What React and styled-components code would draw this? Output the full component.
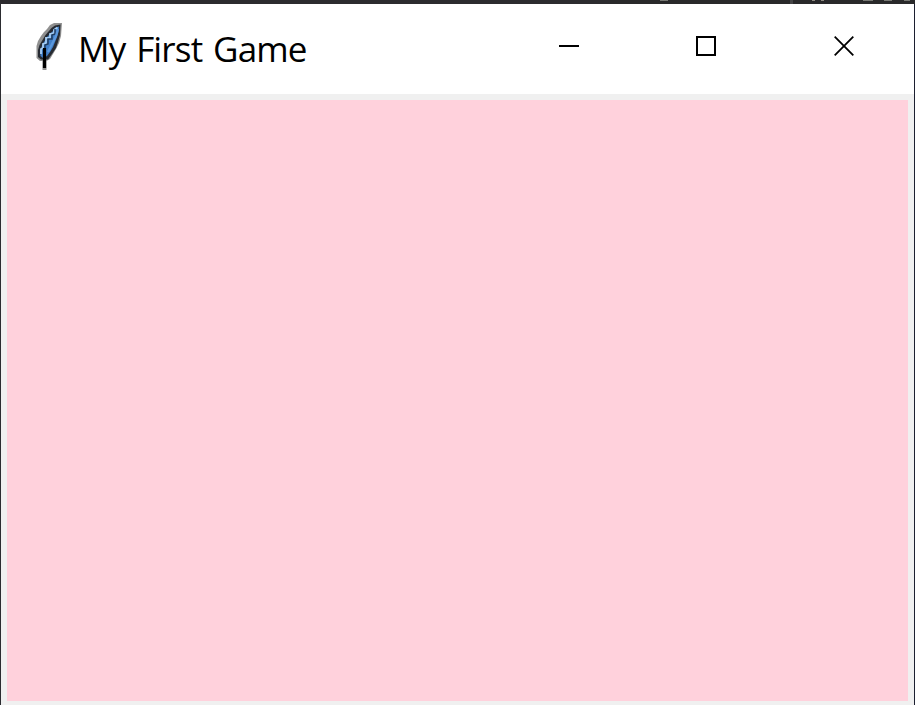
import React from "react";
import styled, { createGlobalStyle } from "styled-components";

const GlobalStyle = createGlobalStyle`
  * { box-sizing: border-box; }
  body { margin: 0; overflow: hidden; background: #28282b; }
`;

const Desktop = styled.div`
  width: 915px;
  height: 705px;
  display: grid;
  grid-template-rows: 4px 1fr;
  background: linear-gradient(90deg, #2b2c30 0 50%, #1c1f30 50%);
`;

const Backdrop = styled.div`
  background: #29292a;
  svg { display: block; }
`;

const Window = styled.main`
  margin: 0 1px;
  display: flex;
  flex-direction: column;
  background: #f0f0f0;
`;

const TitleBar = styled.header`
  height: 90px;
  display: flex;
  align-items: flex-start;
  padding-left: 33px;
  background: #fff;
`;

const AppIcon = styled.svg`
  width: 32px;
  height: 54px;
  margin-top: 16px;
  flex: none;
`;

const Title = styled.h1`
  margin: 20px 0 0 12px;
  color: #000;
  font: 380 35px/50px "Open Sans", "Noto Sans", sans-serif;
  letter-spacing: -0.85px;
  word-spacing: 2.6px;
  white-space: nowrap;
`;

const Controls = styled.div`
  display: flex;
  margin-left: auto;
`;

const ControlButton = styled.button`
  width: ${({ $width }) => $width || 138}px;
  height: 84px;
  padding: 0;
  border: 0;
  display: flex;
  align-items: center;
  justify-content: center;
  background: transparent;
  svg { display: block; }
`;

const Canvas = styled.section`
  flex: 1;
  margin: 6px 6px 4px;
  background: #ffd1dc;
`;

const Feather = () => (
  <AppIcon viewBox="34 20 32 54" aria-hidden="true">
    <defs>
      <filter id="soft" x="-20%" y="-20%" width="140%" height="140%">
        <feGaussianBlur stdDeviation="0.75" />
      </filter>
    </defs>
    <g filter="url(#soft)">
      <path d="M62 23H54L50 25L47 29L44 32L41 36L38 41L36.500 46V58L40 61H42.500V70H46.500V61L50 59L53 54L56 49L59 43L61 36Z" fill="#909090" />
      <path d="M60.500 24.500L55 25.500L51.500 28L48.500 31.500L45.500 35L42.500 40L39.500 45L38 50V57L41 59.500H48L52 54L56 48L58 42L60 35Z" fill="#282c32" />
      <path d="M59 26.500L55 28L53 31L50 34L47 37L44 42L42 46L40.500 50V56L43 58L47 56L50 52L53 47L55 42L57 37L58.500 32Z" fill="#417fc9" />
      <path d="M57.500 27.500L54 30V33L50 34V38L46 38V43L43 44V48L41 49V54" fill="none" stroke="#a5ccf2" strokeWidth="1.8" />
      <path d="M55 29V34L52 35V39L48 39V44L45 45V49" fill="none" stroke="#203b5d" strokeWidth="1.5" />
      <path d="M58 29L56 36L53 42L50 48L48 52" fill="none" stroke="#5c98dc" strokeWidth="2.2" />
      <path d="M44.500 48V68" stroke="#000" strokeWidth="3.2" />
    </g>
  </AppIcon>
);

const BackdropDetails = () => (
  <svg width="915" height="4" aria-hidden="true">
    <path d="M0 0H610V4H0Z" fill="#2c2b2e" />
    <path d="M790 0H793V4H790Z" fill="#444445" />
    <path d="M660 0H668M863 0H873M884 0H892M904 0H910" stroke="#777873" strokeWidth="2" />
    <path d="M812 0H815M821 0H824" stroke="#8c8880" strokeWidth="2" />
  </svg>
);

export default function App() {
  return (
    <>
      <GlobalStyle />
      <Desktop>
        <Backdrop><BackdropDetails /></Backdrop>
        <Window>
          <TitleBar>
            <Feather />
            <Title>My First Game</Title>
            <Controls>
              <ControlButton aria-label="Minimize"><svg width="20" height="20"><path d="M0 10H20" stroke="#000" strokeWidth="2" /></svg></ControlButton>
              <ControlButton $width={136} aria-label="Maximize"><svg width="20" height="20"><rect x="1" y="1" width="18" height="18" fill="none" stroke="#000" strokeWidth="2" /></svg></ControlButton>
              <ControlButton $width={140} aria-label="Close"><svg width="20" height="20"><path d="M.7 .7L19.3 19.3M19.3 .7L.7 19.3" stroke="#000" strokeWidth="1.8" /></svg></ControlButton>
            </Controls>
          </TitleBar>
          <Canvas aria-label="Game canvas" />
        </Window>
      </Desktop>
    </>
  );
}
